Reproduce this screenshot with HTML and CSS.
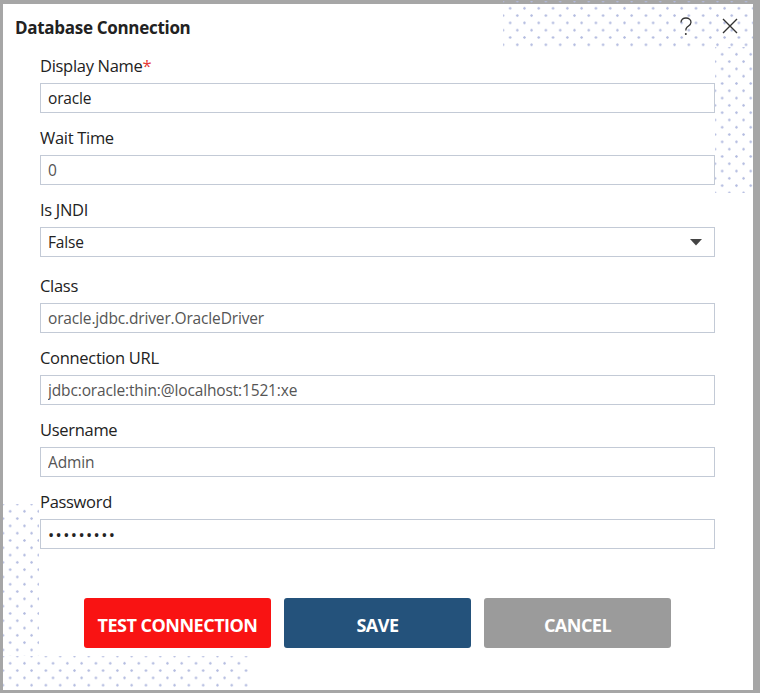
FILE: index.html
```html
<!DOCTYPE html>
<html>
<head>
<meta charset="utf-8">
<link rel="stylesheet" href="styles.css">
</head>
<body>
<div class="dialog">
  <div class="dots dots-top"></div>
  <div class="dots dots-right"></div>
  <div class="dots dots-left"></div>
  <div class="dots dots-bottom"></div>
  <div class="header">
    <div class="title">Database Connection</div>
    <div class="tools">
      <svg class="help" width="14" height="20" viewBox="0 0 14 20"><path d="M2 5.5 C2 2.5 4.3 1 7 1 C9.8 1 12 2.7 12 5.3 C12 8 9.6 8.8 8 10.2 C7 11.1 6.8 12 6.8 13.5" fill="none" stroke="#333" stroke-width="1.3"/><circle cx="6.8" cy="17" r="1" fill="#333"/></svg>
      <svg class="close" width="18" height="18" viewBox="0 0 18 18"><path d="M2 2 L16 16 M16 2 L2 16" stroke="#333" stroke-width="1.4" fill="none"/></svg>
    </div>
  </div>
  <div class="form">
    <div class="field">
      <label class="label">Display Name<span class="req">*</span></label>
      <input class="input dark" type="text" value="oracle">
    </div>
    <div class="field">
      <label class="label">Wait Time</label>
      <input class="input" type="text" value="0">
    </div>
    <div class="field field-select">
      <label class="label">Is JNDI</label>
      <div class="input select"><span>False</span>
        <svg width="12" height="7" viewBox="0 0 12 7"><path d="M0 0 L12 0 L6 6.5 Z" fill="#444"/></svg>
      </div>
    </div>
    <div class="field">
      <label class="label">Class</label>
      <input class="input" type="text" value="oracle.jdbc.driver.OracleDriver">
    </div>
    <div class="field">
      <label class="label">Connection URL</label>
      <input class="input" type="text" value="jdbc:oracle:thin:@localhost:1521:xe">
    </div>
    <div class="field">
      <label class="label">Username</label>
      <input class="input" type="text" value="Admin">
    </div>
    <div class="field">
      <label class="label">Password</label>
      <input class="input dark pw" type="password" value="123456789">
    </div>
  </div>
  <div class="buttons">
    <button class="btn btn-red">TEST CONNECTION</button>
    <button class="btn btn-blue">SAVE</button>
    <button class="btn btn-gray">CANCEL</button>
  </div>
</div>
</body>
</html>
```

FILE: styles.css
```css
html, body {
  margin: 0;
  padding: 0;
}
body {
  background: #a6a6a6;
  width: 760px;
  height: 693px;
  overflow: hidden;
  font-family: "Open Sans", "Noto Sans", sans-serif;
  padding: 4px 0 0 3px;
  box-sizing: border-box;
}
.dialog {
  position: relative;
  width: 750px;
  height: 686px;
  background: #fff;
  display: flex;
  flex-direction: column;
  box-sizing: border-box;
}
.dots {
  position: absolute;
  background-image:
    radial-gradient(circle at 50% 50%, #b3bbe0 0.9px, rgba(255,255,255,0) 1.5px),
    radial-gradient(circle at 50% 50%, #b3bbe0 0.9px, rgba(255,255,255,0) 1.5px);
  background-size: 14.3px 14.6px;
  background-position: 0 0, 7.15px 7.3px;
}
.dots-top { left: 500px; top: -3px; width: 250px; height: 46px; }
.dots-right { left: 712px; top: 43px; width: 38px; height: 146px; }
.dots-left { left: 0; top: 500px; width: 36px; height: 152px; }
.dots-bottom { left: 0; top: 652px; width: 248px; height: 34px; }
.header {
  position: relative;
  display: flex;
  justify-content: space-between;
  align-items: flex-start;
  padding: 12px 14px 0 12px;
  height: 36px;
  box-sizing: border-box;
}
.title {
  font-weight: 700;
  font-size: 17px;
  line-height: 24px;
  color: #222;
  letter-spacing: -0.3px;
}
.tools {
  display: flex;
  gap: 28px;
  align-items: flex-start;
}
.help { margin-top: 1px; }
.close { margin-top: 1px; }
.form {
  position: relative;
  padding: 15px 0 0 37px;
  display: flex;
  flex-direction: column;
}
.field {
  display: flex;
  flex-direction: column;
  margin-bottom: 14px;
}
.field-select { margin-bottom: 18px; }
.label {
  font-size: 16.5px;
  line-height: 22px;
  color: #222;
  margin-bottom: 6px;
  letter-spacing: -0.3px;
}
.req { color: #e53935; }
.input {
  width: 675px;
  height: 30px;
  box-sizing: border-box;
  border: 1px solid #c3cad6;
  background: #fff;
  padding: 0 7px;
  font-family: "Open Sans", "Noto Sans", sans-serif;
  font-size: 15.5px;
  color: #555;
  outline: none;
  margin: 0;
  letter-spacing: -0.15px;
}
.input.dark { color: #222; }
.pw { letter-spacing: 1.4px; font-size: 16.5px; color: #333; }
.select {
  display: flex;
  align-items: center;
  justify-content: space-between;
  padding-right: 12px;
  color: #222;
  line-height: 28px;
}
.buttons {
  position: relative;
  display: flex;
  gap: 13px;
  padding: 35px 0 0 81px;
}
.btn {
  width: 187px;
  height: 50px;
  border: none;
  border-radius: 3px;
  color: #fff;
  font-family: "Open Sans", "Noto Sans", sans-serif;
  font-weight: 700;
  font-size: 18px;
  letter-spacing: -0.5px;
  padding: 3px 0 0 0;
}
.btn-red { background: #f91313; }
.btn-blue { background: #24527b; }
.btn-gray { background: #9b9b9b; }
```
